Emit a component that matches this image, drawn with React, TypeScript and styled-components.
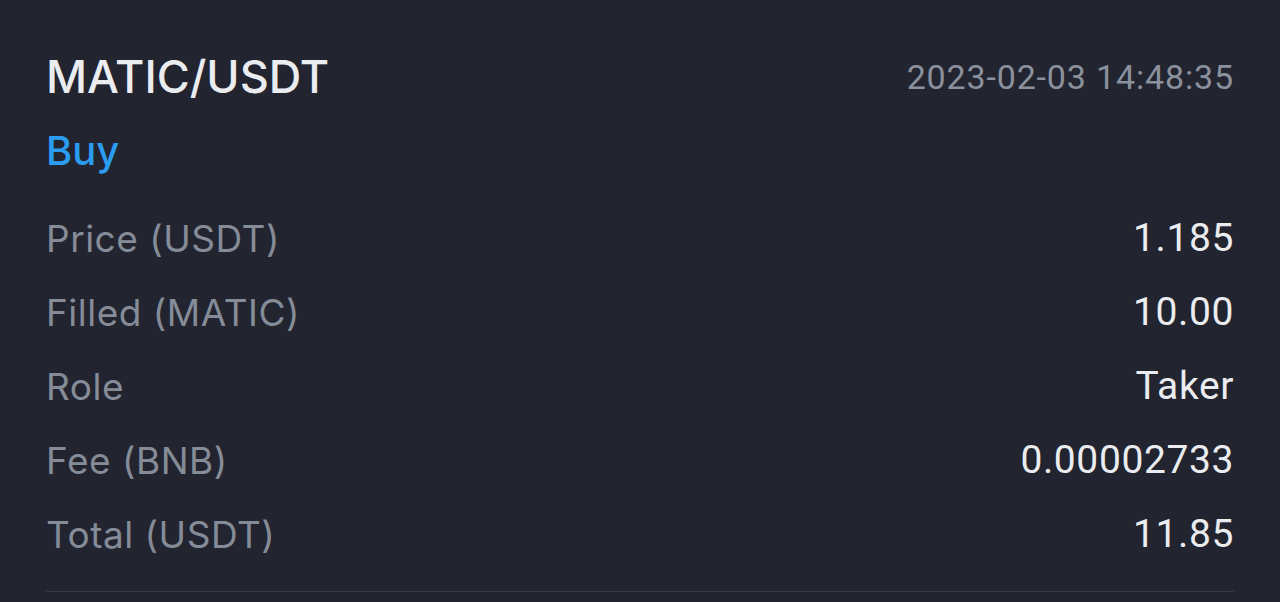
import React from "react";
import styled, { createGlobalStyle } from "styled-components";

const Global = createGlobalStyle`
  html, body { margin: 0; padding: 0; background: #222430; }
  body { font-family: Inter, "Noto Sans", sans-serif; }
`;

const Card = styled.div`
  box-sizing: border-box;
  width: 1280px;
  height: 602px;
  background: #222430;
  padding: 49px 46px 0 46px;
  display: flex;
  flex-direction: column;
`;

const Header = styled.div`
  display: flex;
  justify-content: space-between;
  align-items: center;
  height: 56px;
`;

const Pair = styled.div`
  font-family: Inter, "Noto Sans", sans-serif;
  font-size: 45px;
  font-weight: 500;
  color: #eaecef;
  line-height: 56px;
`;

const Time = styled.div`
  font-family: Roboto, sans-serif;
  font-size: 34px;
  color: #8b919c;
  line-height: 56px;
  letter-spacing: 0.85px;
`;

const Side = styled.div`
  margin-top: 21px;
  font-family: Inter, "Noto Sans", sans-serif;
  font-size: 40px;
  font-weight: 500;
  color: #2a9df0;
  line-height: 50px;
`;

const Rows = styled.div`
  margin-top: 25px;
  display: flex;
  flex-direction: column;
`;

const Row = styled.div`
  display: flex;
  justify-content: space-between;
  align-items: center;
  height: 74px;
`;

const Label = styled.span`
  font-family: Inter, "Noto Sans", sans-serif;
  font-size: 37px;
  letter-spacing: 0.5px;
  color: #858c98;
`;

const Value = styled.span`
  font-family: Roboto, sans-serif;
  font-size: 39px;
  color: #eaecef;
  letter-spacing: 0.6px;
`;

const Divider = styled.div`
  margin-top: 20px;
  height: 1px;
  background: #353846;
`;

const rows: [string, string][] = [
  ["Price (USDT)", "1.185"],
  ["Filled (MATIC)", "10.00"],
  ["Role", "Taker"],
  ["Fee (BNB)", "0.00002733"],
  ["Total (USDT)", "11.85"],
];

export default function App() {
  return (
    <>
      <Global />
      <Card>
        <Header>
          <Pair>MATIC/USDT</Pair>
          <Time>2023-02-03 14:48:35</Time>
        </Header>
        <Side>Buy</Side>
        <Rows>
          {rows.map(([l, v]) => (
            <Row key={l}>
              <Label>{l}</Label>
              <Value>{v}</Value>
            </Row>
          ))}
        </Rows>
        <Divider />
      </Card>
    </>
  );
}
